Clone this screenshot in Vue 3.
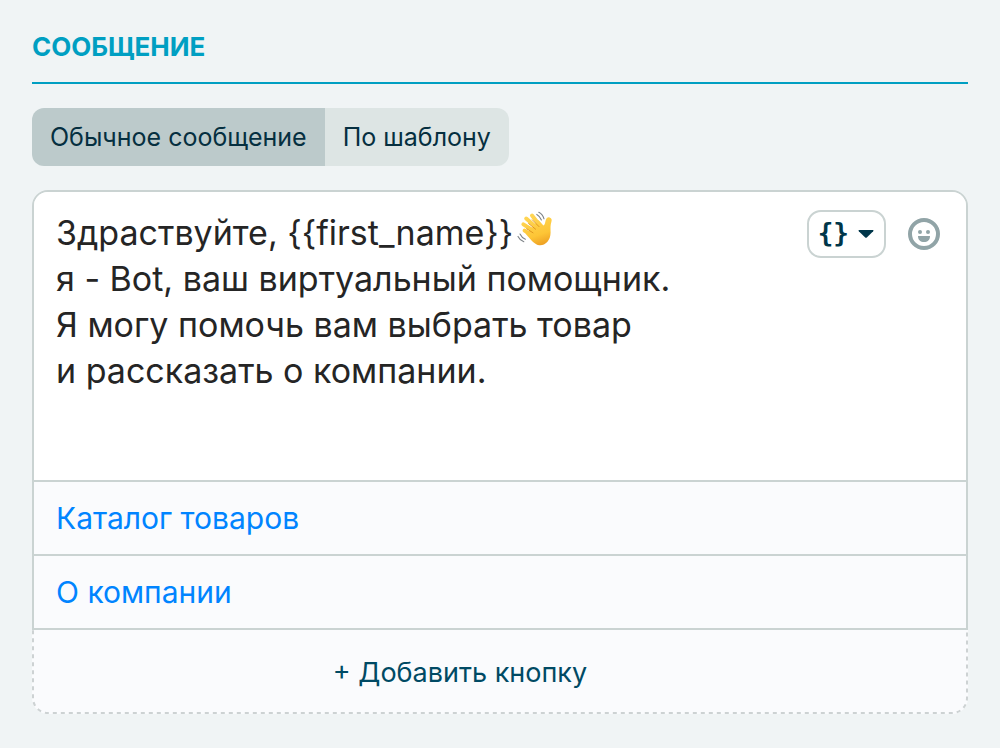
<script setup>
import { ref } from 'vue'

const tabs = ['Обычное сообщение', 'По шаблону']
const activeTab = ref(0)
const message = ref(
  'Здраствуйте, {{first_name}} \n' +
  'я - Bot, ваш виртуальный помощник.\n' +
  'Я могу помочь вам выбрать товар\n' +
  'и рассказать о компании.'
)
const buttons = ['Каталог товаров', 'О компании']
</script>

<template>
  <main class="panel">
    <h2 class="title">СООБЩЕНИЕ</h2>

    <div class="tabs">
      <button
        v-for="(tab, i) in tabs"
        :key="tab"
        type="button"
        class="tab"
        :class="{ active: i === activeTab }"
        :aria-pressed="i === activeTab"
        @click="activeTab = i"
      >{{ tab }}</button>
    </div>

    <section class="editor">
      <div class="message">
        <textarea v-model="message" class="text" rows="4" aria-label="Текст сообщения" spellcheck="false"></textarea>
        <svg class="wave" viewBox="0 0 36 36" aria-hidden="true">
          <defs>
            <linearGradient id="skin" gradientUnits="userSpaceOnUse" x1="14" y1="4" x2="25" y2="35">
              <stop offset="0" stop-color="#ffd655" />
              <stop offset="0.65" stop-color="#fdc536" />
              <stop offset="1" stop-color="#ec9d22" />
            </linearGradient>
          </defs>
          <g fill="none" stroke="url(#skin)" stroke-width="4" stroke-linecap="round">
            <path d="M24 16 L15 4.6" />
            <path d="M20 17 L9.2 7.6" />
            <path d="M17 20 L6.4 13.4" />
            <path d="M17 25.4 L7.6 19.6" />
          </g>
          <path
            fill="url(#skin)"
            d="M15 17 L21.5 9 L26.4 14.6 C28 13.8 28 11.6 28.7 9.2 C29.4 6.6 31 5.8 32.6 6.4 C34.8 7.2 35 8.8 34.4 10.8 C33.2 14.6 33.6 17 33.6 21.5 C33.6 30 27.6 34.8 22.4 34.2 C18 33.6 14.6 29.6 11 25.4 L8.4 22.4 Z"
          />
          <g fill="none" stroke="#d98a17" stroke-width="0.8" stroke-linecap="round">
            <path d="M11.6 12.6 L18.6 18.2" />
            <path d="M15.2 8.8 L22 15.6" />
            <path d="M9.6 17.8 L16 21.8" />
          </g>
          <g fill="none" stroke="#7d8387" stroke-width="1.1" stroke-linecap="round">
            <path d="M19.8 3.4 C22 4.6 23.6 6.4 24.4 9" />
            <path d="M21.8 1.2 C24.6 2.6 26.2 4.8 27 7.8" />
            <path d="M1 25.4 C2.4 28.2 4.2 29.8 6.8 30.8" />
            <path d="M3 23 C4.2 25.6 6 27.2 8.4 28.2" />
          </g>
        </svg>
        <div class="tools">
          <button type="button" class="vars" aria-label="Вставить переменную">
            <span>{}</span>
            <svg width="16" height="8" viewBox="0 0 16 8" aria-hidden="true">
              <path d="M1 0 H15 Q16 .4 15.2 1.2 L8.8 7.4 Q8 8 7.2 7.4 L.8 1.2 Q0 .4 1 0Z" fill="#00364a" />
            </svg>
          </button>
          <button type="button" class="emoji" aria-label="Вставить эмодзи">
            <svg width="32" height="32" viewBox="0 0 32 32" aria-hidden="true">
              <circle cx="16" cy="16" r="14" fill="none" stroke="#91a4a7" stroke-width="4" />
              <circle cx="12" cy="14" r="2" fill="#91a4a7" />
              <circle cx="20" cy="14" r="2" fill="#91a4a7" />
              <path d="M10 18 H22 C22 22 19.5 24 16 24 C12.5 24 10 22 10 18Z" fill="#91a4a7" />
            </svg>
          </button>
        </div>
      </div>
      <button v-for="b in buttons" :key="b" type="button" class="row">{{ b }}</button>
    </section>
    <button type="button" class="add">
      <svg class="dashes" aria-hidden="true"><rect class="outline" x="1" y="-21" rx="15" /></svg>
      + Добавить кнопку
    </button>
  </main>
</template>

<style>
body {
  background: #f0f4f5;
}
</style>

<style scoped>
.panel {
  padding: 32px;
  font-family: Inter, "Liberation Sans", sans-serif;
}
button {
  margin: 0;
  font-family: inherit;
  cursor: pointer;
}
.title {
  margin: 0 0 24px;
  padding-bottom: 20px;
  border-bottom: 2px solid #009fc2;
  color: #009fc2;
  font-size: 26px;
  line-height: 30px;
  font-weight: 700;
}
.tabs {
  display: flex;
  width: fit-content;
  margin-bottom: 24px;
  border-radius: 12px;
  overflow: hidden;
}
.tab {
  padding: 0 18px;
  border: 0;
  background: #dde5e4;
  color: #052f40;
  font-size: 25px;
  line-height: 58px;
}
.tab.active {
  background: #bccacb;
}
.editor {
  border: 2px solid #cad3d2;
  border-radius: 16px 16px 0 0;
  background: #fafbfd;
  overflow: hidden;
}
.message {
  position: relative;
  display: flex;
  background: #fff;
}
.text {
  flex: 1;
  min-width: 0;
  height: 288px;
  box-sizing: border-box;
  padding: 18px 22px;
  border: 0;
  outline: 0;
  resize: none;
  background: transparent;
  color: #252525;
  font-family: inherit;
  font-size: 34px;
  line-height: 46px;
  white-space: pre;
  overflow: hidden;
}
.wave {
  position: absolute;
  left: 483px;
  top: 19px;
  width: 36px;
  height: 36px;
}
.tools {
  display: flex;
  align-items: flex-start;
  gap: 22px;
  padding: 18px 26px 0 0;
}
.vars {
  display: flex;
  align-items: center;
  gap: 9px;
  height: 48px;
  padding: 0 10px 0 9px;
  border: 2px solid #cad3d2;
  border-radius: 14px;
  background: #fff;
  color: #00364a;
  font-family: "DejaVu Sans Mono", monospace;
  font-size: 26px;
  line-height: 28px;
  font-weight: 700;
}
.vars span {
  padding-bottom: 3px;
}
.emoji {
  display: flex;
  align-items: center;
  height: 48px;
  padding: 0;
  border: 0;
  background: none;
}
.row {
  display: block;
  width: 100%;
  padding: 0 22px;
  border: 0;
  border-top: 2px solid #cad3d2;
  background: #fafbfd;
  color: #0084ff;
  font-size: 30px;
  line-height: 72px;
  text-align: left;
}
.add {
  position: relative;
  display: block;
  width: 100%;
  padding: 2px 80px 0 0;
  border: 0;
  border-radius: 0 0 16px 16px;
  background: #fafbfd;
  color: #004a64;
  font-size: 27px;
  line-height: 82px;
}
.dashes {
  position: absolute;
  inset: 0;
  width: 100%;
  height: 100%;
  overflow: hidden;
}
.outline {
  width: calc(100% - 2px);
  height: calc(100% + 20px);
  fill: none;
  stroke: #cdd2d3;
  stroke-width: 2px;
  stroke-dasharray: 4 4;
}
</style>
